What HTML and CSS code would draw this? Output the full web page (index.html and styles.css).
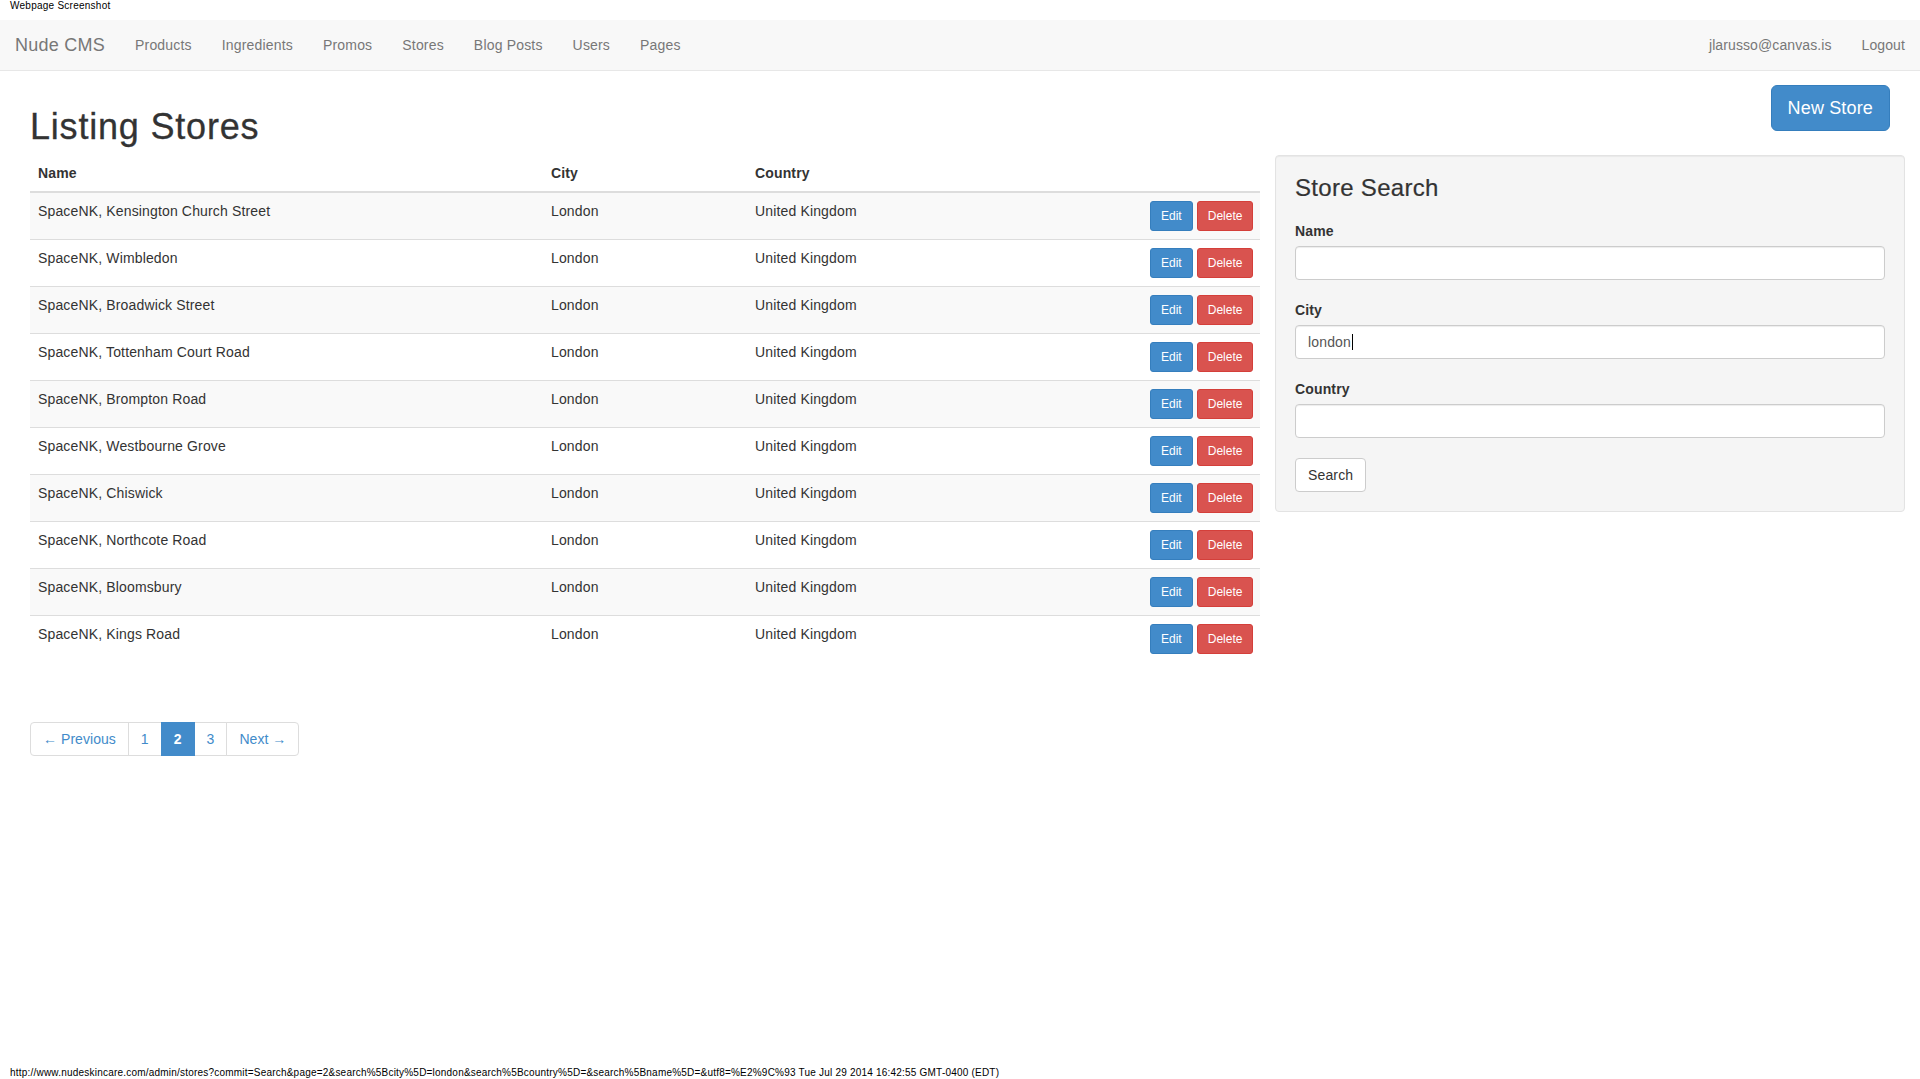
FILE: index.html
```html
<!DOCTYPE html>
<html lang="en">
<head>
<meta charset="utf-8">
<title>Listing Stores - Nude CMS</title>
<link rel="stylesheet" href="styles.css">
</head>
<body>
<div class="capture-header">Webpage Screenshot</div>

<nav class="navbar">
  <a class="brand" href="#">Nude CMS</a>
  <ul class="nav">
    <li><a href="#">Products</a></li>
    <li><a href="#">Ingredients</a></li>
    <li><a href="#">Promos</a></li>
    <li><a href="#">Stores</a></li>
    <li><a href="#">Blog Posts</a></li>
    <li><a href="#">Users</a></li>
    <li><a href="#">Pages</a></li>
  </ul>
  <ul class="nav nav-right">
    <li><a href="#">jlarusso@canvas.is</a></li>
    <li><a href="#">Logout</a></li>
  </ul>
</nav>

<main class="container">
  <div class="title-row">
    <h1>Listing Stores</h1>
    <a class="btn btn-primary btn-lg" href="#">New Store</a>
  </div>

  <div class="content-row">
    <div class="col-main">
      <table class="table">
        <colgroup>
          <col class="c-name">
          <col class="c-city">
          <col class="c-country">
          <col class="c-actions">
        </colgroup>
        <thead>
          <tr><th>Name</th><th>City</th><th>Country</th><th></th></tr>
        </thead>
        <tbody>
          <tr><td>SpaceNK, Kensington Church Street</td><td>London</td><td>United Kingdom</td><td class="actions"><a class="btn btn-sm btn-primary" href="#">Edit</a> <a class="btn btn-sm btn-danger" href="#">Delete</a></td></tr>
          <tr><td>SpaceNK, Wimbledon</td><td>London</td><td>United Kingdom</td><td class="actions"><a class="btn btn-sm btn-primary" href="#">Edit</a> <a class="btn btn-sm btn-danger" href="#">Delete</a></td></tr>
          <tr><td>SpaceNK, Broadwick Street</td><td>London</td><td>United Kingdom</td><td class="actions"><a class="btn btn-sm btn-primary" href="#">Edit</a> <a class="btn btn-sm btn-danger" href="#">Delete</a></td></tr>
          <tr><td>SpaceNK, Tottenham Court Road</td><td>London</td><td>United Kingdom</td><td class="actions"><a class="btn btn-sm btn-primary" href="#">Edit</a> <a class="btn btn-sm btn-danger" href="#">Delete</a></td></tr>
          <tr><td>SpaceNK, Brompton Road</td><td>London</td><td>United Kingdom</td><td class="actions"><a class="btn btn-sm btn-primary" href="#">Edit</a> <a class="btn btn-sm btn-danger" href="#">Delete</a></td></tr>
          <tr><td>SpaceNK, Westbourne Grove</td><td>London</td><td>United Kingdom</td><td class="actions"><a class="btn btn-sm btn-primary" href="#">Edit</a> <a class="btn btn-sm btn-danger" href="#">Delete</a></td></tr>
          <tr><td>SpaceNK, Chiswick</td><td>London</td><td>United Kingdom</td><td class="actions"><a class="btn btn-sm btn-primary" href="#">Edit</a> <a class="btn btn-sm btn-danger" href="#">Delete</a></td></tr>
          <tr><td>SpaceNK, Northcote Road</td><td>London</td><td>United Kingdom</td><td class="actions"><a class="btn btn-sm btn-primary" href="#">Edit</a> <a class="btn btn-sm btn-danger" href="#">Delete</a></td></tr>
          <tr><td>SpaceNK, Bloomsbury</td><td>London</td><td>United Kingdom</td><td class="actions"><a class="btn btn-sm btn-primary" href="#">Edit</a> <a class="btn btn-sm btn-danger" href="#">Delete</a></td></tr>
          <tr><td>SpaceNK, Kings Road</td><td>London</td><td>United Kingdom</td><td class="actions"><a class="btn btn-sm btn-primary" href="#">Edit</a> <a class="btn btn-sm btn-danger" href="#">Delete</a></td></tr>
        </tbody>
      </table>

      <ul class="pagination">
        <li><a href="#">&larr; Previous</a></li>
        <li><a href="#">1</a></li>
        <li class="active"><a href="#">2</a></li>
        <li><a href="#">3</a></li>
        <li><a href="#">Next &rarr;</a></li>
      </ul>
    </div>

    <aside class="well">
      <h3>Store Search</h3>
      <form class="search-form">
        <div class="form-group">
          <label for="s-name">Name</label>
          <input id="s-name" class="form-control" type="text">
        </div>
        <div class="form-group">
          <label>City</label>
          <div class="form-control filled">london<span class="caret"></span></div>
        </div>
        <div class="form-group">
          <label for="s-country">Country</label>
          <input id="s-country" class="form-control" type="text">
        </div>
        <button class="btn btn-default" type="button">Search</button>
      </form>
    </aside>
  </div>
</main>

<footer class="capture-footer">http://www.nudeskincare.com/admin/stores?commit=Search&amp;page=2&amp;search%5Bcity%5D=london&amp;search%5Bcountry%5D=&amp;search%5Bname%5D=&amp;utf8=%E2%9C%93 Tue Jul 29 2014 16:42:55 GMT-0400 (EDT)</footer>
</body>
</html>
```

FILE: styles.css
```css
* {
  box-sizing: border-box;
}

html, body {
  margin: 0;
  padding: 0;
}

body {
  font-family: "Liberation Sans", Arial, Helvetica, sans-serif;
  font-size: 14px;
  line-height: 20px;
  letter-spacing: 0.15px;
  color: #333;
  background: #fff;
  min-height: 1079px;
  display: flex;
  flex-direction: column;
}

a {
  text-decoration: none;
}

/* capture chrome */
.capture-header {
  height: 20px;
  padding-left: 10px;
  font-size: 10px;
  line-height: 12px;
  letter-spacing: 0.25px;
  color: #000;
}

.capture-footer {
  margin-top: auto;
  padding-left: 10px;
  font-size: 10px;
  line-height: 12px;
  height: 12px;
  letter-spacing: 0.21px;
  color: #000;
  white-space: nowrap;
}

/* navbar */
.navbar {
  display: flex;
  align-items: stretch;
  height: 51px;
  background: #f8f8f8;
  border-bottom: 1px solid #e7e7e7;
  margin-bottom: 14px;
}

.brand {
  padding: 0 15px;
  font-size: 18px;
  line-height: 50px;
  letter-spacing: 0.25px;
  color: #777;
}

.nav {
  display: flex;
  list-style: none;
  margin: 0;
  padding: 0;
}

.nav a {
  display: block;
  padding: 0 15px;
  line-height: 50px;
  letter-spacing: 0.18px;
  color: #777;
}

.nav-right {
  margin-left: auto;
}

.nav-right a {
  letter-spacing: 0.1px;
}

/* layout */
.container {
  padding: 0 15px;
}

.title-row {
  display: flex;
  justify-content: space-between;
  align-items: flex-start;
  padding: 0 15px;
}

h1 {
  margin: 22px 0 8px;
  font-size: 36px;
  font-weight: 500;
  line-height: 1.1;
  letter-spacing: 0.8px;
  -webkit-text-stroke: 0.3px #333;
}

.content-row {
  display: flex;
  align-items: flex-start;
}

.col-main {
  width: 1260px;
  flex: 0 0 1260px;
  padding: 0 15px;
}

/* buttons */
.btn {
  display: inline-block;
  border: 1px solid transparent;
  border-radius: 4px;
  padding: 6px 12px;
  font-family: inherit;
  font-size: 14px;
  line-height: 20px;
  letter-spacing: inherit;
  text-align: center;
  white-space: nowrap;
  cursor: pointer;
}

.btn-lg {
  padding: 10px 16px;
  font-size: 18px;
  line-height: 24px;
  border-radius: 6px;
}

.btn-sm {
  padding: 5px 10px;
  font-size: 12px;
  line-height: 18px;
  border-radius: 3px;
  letter-spacing: 0;
}

.btn-primary {
  color: #fff;
  background: #428bca;
  border-color: #357ebd;
}

.btn-danger {
  color: #fff;
  background: #d9534f;
  border-color: #d43f3a;
}

.btn-default {
  color: #333;
  background: #fff;
  border-color: #ccc;
}

/* table */
.table {
  width: 1230px;
  border-collapse: collapse;
  border-spacing: 0;
  table-layout: fixed;
  margin: 0;
}

.c-name { width: 513px; }
.c-city { width: 204px; }
.c-country { width: 395px; }
.c-actions { width: 118px; }

.table th,
.table td {
  padding: 8px;
  text-align: left;
  line-height: 20px;
  vertical-align: top;
  border-top: 1px solid #ddd;
}

.table thead th {
  border-top: 0;
  border-bottom: 2px solid #ddd;
  vertical-align: bottom;
  font-weight: bold;
}

.table tbody tr:nth-child(odd) td {
  background: #f9f9f9;
}

.table td.actions {
  text-align: right;
  white-space: nowrap;
  padding-right: 13px;
}

/* pagination */
.pagination {
  display: inline-flex;
  list-style: none;
  margin: 60px 0 0;
  padding: 0;
}

.pagination li a {
  display: block;
  padding: 6px 12px;
  line-height: 20px;
  letter-spacing: 0.05px;
  color: #428bca;
  background: #fff;
  border: 1px solid #ddd;
  margin-left: -1px;
}

.pagination li:first-child a {
  margin-left: 0;
  border-radius: 4px 0 0 4px;
}

.pagination li:last-child a {
  border-radius: 0 4px 4px 0;
}

.pagination li.active a {
  color: #fff;
  background: #428bca;
  border-color: #428bca;
  font-weight: bold;
  position: relative;
  z-index: 1;
}

/* search well */
.well {
  width: 630px;
  flex: 0 0 630px;
  padding: 19px;
  background: #f5f5f5;
  border: 1px solid #e3e3e3;
  border-radius: 4px;
  box-shadow: inset 0 1px 1px rgba(0, 0, 0, 0.05);
  margin-bottom: 20px;
}

.well h3 {
  margin: 0 0 20px;
  font-size: 24px;
  font-weight: 500;
  line-height: 1.1;
  letter-spacing: 0.3px;
  -webkit-text-stroke: 0.2px #333;
}

.search-form {
  margin: 0;
}

.form-group {
  margin-bottom: 20px;
}

.form-group label {
  display: block;
  margin-bottom: 5px;
  font-weight: bold;
}

.form-control {
  display: block;
  width: 100%;
  height: 34px;
  padding: 6px 12px;
  font-family: inherit;
  font-size: 14px;
  line-height: 20px;
  color: #555;
  background: #fff;
  border: 1px solid #ccc;
  border-radius: 4px;
  box-shadow: inset 0 1px 1px rgba(0, 0, 0, 0.075);
  margin: 0;
}

.form-control.filled {
  display: flex;
  align-items: center;
}

.caret {
  display: inline-block;
  width: 1px;
  height: 16px;
  margin-left: 1px;
  background: #000;
}
```
